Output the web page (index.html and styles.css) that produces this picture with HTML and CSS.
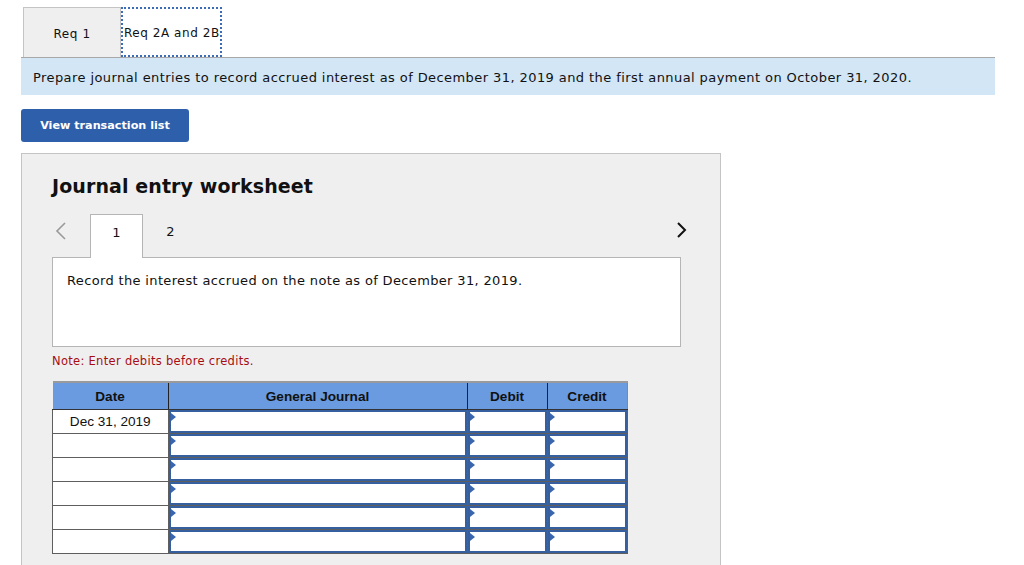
FILE: index.html
```html
<!DOCTYPE html>
<html>
<head>
<meta charset="utf-8">
<link rel="stylesheet" href="styles.css">
</head>
<body>
<div class="page">
  <div class="req-tabs">
    <div class="req-tab">Req 1</div>
    <div class="req-tab active">Req 2A and 2B</div>
  </div>
  <div class="instruction">Prepare journal entries to record accrued interest as of December 31, 2019 and the first annual payment on October 31, 2020.</div>
  <button class="btn">View transaction list</button>
  <div class="panel">
    <h2 class="title">Journal entry worksheet</h2>
    <div class="nav">
      <span class="arrow left"><svg width="12" height="18" viewBox="0 0 12 18"><path d="M10 1 L2 9 L10 17" fill="none" stroke="#999" stroke-width="1.6"/></svg></span>
      <div class="step active">1</div>
      <div class="step">2</div>
      <span class="spacer"></span>
      <span class="arrow right"><svg width="12" height="18" viewBox="0 0 12 18"><path d="M2 2 L9 9 L2 16" fill="none" stroke="#111" stroke-width="2"/></svg></span>
    </div>
    <div class="desc">Record the interest accrued on the note as of December 31, 2019.</div>
    <div class="note">Note: Enter debits before credits.</div>
    <table class="journal">
      <thead>
        <tr><th class="c-date">Date</th><th class="c-acct">General Journal</th><th class="c-num">Debit</th><th class="c-num c-last">Credit</th></tr>
      </thead>
      <tbody>
        <tr><td class="date">Dec 31, 2019</td><td class="in"><div class="box"></div></td><td class="in"><div class="box"></div></td><td class="in"><div class="box"></div></td></tr>
        <tr><td class="date"></td><td class="in"><div class="box"></div></td><td class="in"><div class="box"></div></td><td class="in"><div class="box"></div></td></tr>
        <tr><td class="date"></td><td class="in"><div class="box"></div></td><td class="in"><div class="box"></div></td><td class="in"><div class="box"></div></td></tr>
        <tr><td class="date"></td><td class="in"><div class="box"></div></td><td class="in"><div class="box"></div></td><td class="in"><div class="box"></div></td></tr>
        <tr><td class="date"></td><td class="in"><div class="box"></div></td><td class="in"><div class="box"></div></td><td class="in"><div class="box"></div></td></tr>
        <tr><td class="date"></td><td class="in"><div class="box"></div></td><td class="in"><div class="box"></div></td><td class="in"><div class="box"></div></td></tr>
      </tbody>
    </table>
  </div>
</div>
</body>
</html>
```

FILE: styles.css
```css
html, body { margin: 0; padding: 0; background: #fff; }
body { font-family: "DejaVu Sans", Verdana, sans-serif; color: #111; overflow: hidden; height: 565px; }
.page { padding: 7px 29px 0 21px; }

.req-tabs { display: flex; padding-left: 2px; height: 50px; }
.req-tab {
  box-sizing: border-box; width: 98px; height: 50px;
  background: #efefef; border: 1px solid #c4c4c4; border-bottom: none;
  display: flex; align-items: center; justify-content: center;
  font-size: 12px; letter-spacing: 0.6px; color: #111; padding-top: 2px;
  white-space: nowrap;
}
.req-tab.active {
  width: 101px; background: #fff; border: 2px dotted #3b6cb5;
  justify-content: flex-start; padding-left: 1px; letter-spacing: 0.55px;
}

.instruction {
  background: #d2e6f6; border-top: 1px solid #a8a8a8;
  height: 38px; box-sizing: border-box; padding: 12px 12px 0;
  font-size: 13px; letter-spacing: 0.42px; color: #111;
}

.btn {
  display: block; margin-top: 14px; width: 168px; height: 33px;
  background: #2d5fab; color: #fff; border: none; border-radius: 3px;
  font-family: "DejaVu Sans", Verdana, sans-serif; font-weight: bold; font-size: 11.2px;
  padding: 0 0 1px;
}

.panel {
  margin-top: 11px; width: 700px; box-sizing: border-box; height: 420px;
  background: #efefef; border: 1px solid #c4c4c4; border-bottom: none;
  padding: 19px 0 0 30px;
}
.title { margin: 0; font-size: 19px; letter-spacing: 0.1px; font-weight: bold; color: #111; line-height: 26px; }

.nav { display: flex; align-items: flex-end; margin-top: 15px; height: 43px; width: 638px; }
.arrow { display: flex; align-items: center; height: 43px; }
.arrow.left { padding-left: 3px; width: 38px; box-sizing: border-box; margin-bottom: 5px; }
.arrow.right { margin-bottom: 6px; width: 14px; }
.step {
  box-sizing: border-box; width: 53px; height: 43px; font-size: 13px;
  display: flex; align-items: center; justify-content: center; padding-bottom: 8px;
}
.step.active { background: #fff; border: 1px solid #b5b5b5; border-bottom: none; height: 44px; margin-bottom: -1px; position: relative; z-index: 1; }
.step:not(.active) { padding-left: 2px; }
.spacer { flex: 1; }

.desc {
  box-sizing: border-box; width: 629px; height: 90px;
  background: #fff; border: 1px solid #b5b5b5;
  padding: 15px 14px; font-size: 13px; letter-spacing: 0.35px; color: #111;
}
.note { margin-top: 7px; font-size: 11.5px; letter-spacing: 0.3px; color: #a50d12; height: 20px; }

.journal {
  margin-top: 7px; border-collapse: collapse; table-layout: fixed; width: 574px;
  font-family: "Liberation Sans", Arial, sans-serif;
}
.journal th {
  background: #6a9be0; height: 26px; font-size: 13.6px; font-weight: bold; color: #111;
  border-top: 2px solid #9a9a9a; border-bottom: 1px solid #333; border-right: 1px solid #222;
  padding: 0; text-align: center;
}
.journal th.c-last { border-right: 1px solid #888; }
.c-date { width: 115px; }
.c-acct { width: 298px; }
.c-num { width: 79px; }
.journal td { height: 23px; padding: 0; background: #fff; }
.journal td.date {
  border: 1px solid #5e5e5e; border-top: none; border-bottom: 1px solid #5e5e5e;
  text-align: center; font-size: 13.6px; color: #111;
}
.journal td.in { border-right: 1px solid #5e5e5e; border-bottom: 1px solid #5e5e5e; }
.box {
  position: relative; box-sizing: border-box; height: 23px;
  border: 2px solid #355f9e; background: #fff;
}
.box::before {
  content: ""; position: absolute; left: 0; top: 1px;
  border-left: 5px solid #3a66b0; border-top: 4px solid transparent; border-bottom: 4px solid transparent;
}
```
